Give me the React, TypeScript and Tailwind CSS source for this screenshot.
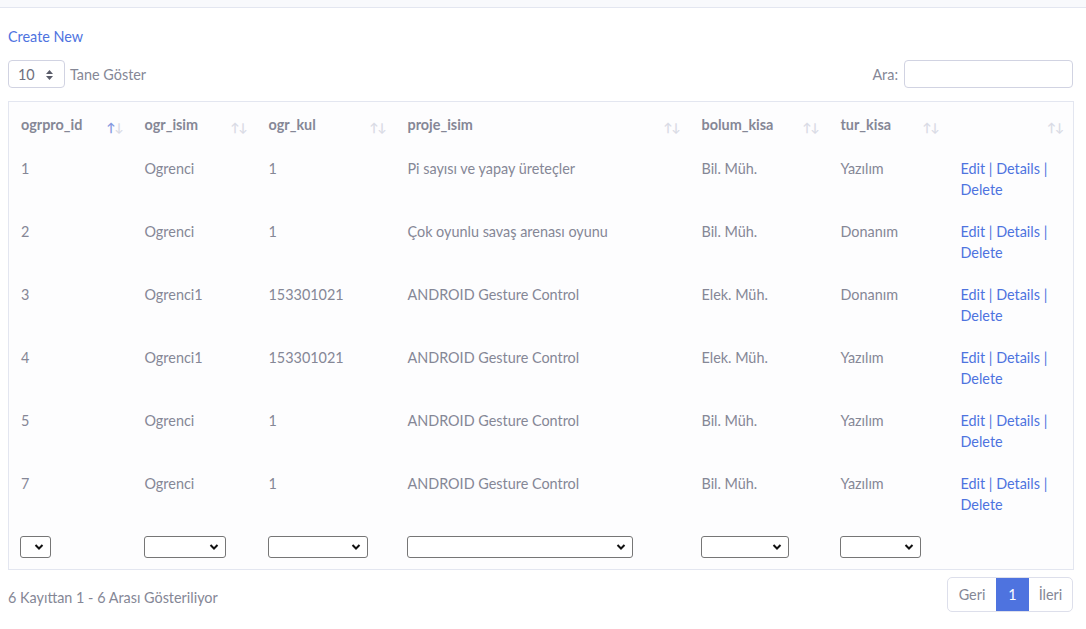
import React from 'react';

type Row = {
  id: string;
  isim: string;
  kul: string;
  proje: string;
  bolum: string;
  tur: string;
};

const rows: Row[] = [
  { id: '1', isim: 'Ogrenci', kul: '1', proje: 'Pi sayısı ve yapay üreteçler', bolum: 'Bil. Müh.', tur: 'Yazılım' },
  { id: '2', isim: 'Ogrenci', kul: '1', proje: 'Çok oyunlu savaş arenası oyunu', bolum: 'Bil. Müh.', tur: 'Donanım' },
  { id: '3', isim: 'Ogrenci1', kul: '153301021', proje: 'ANDROID Gesture Control', bolum: 'Elek. Müh.', tur: 'Donanım' },
  { id: '4', isim: 'Ogrenci1', kul: '153301021', proje: 'ANDROID Gesture Control', bolum: 'Elek. Müh.', tur: 'Yazılım' },
  { id: '5', isim: 'Ogrenci', kul: '1', proje: 'ANDROID Gesture Control', bolum: 'Bil. Müh.', tur: 'Yazılım' },
  { id: '7', isim: 'Ogrenci', kul: '1', proje: 'ANDROID Gesture Control', bolum: 'Bil. Müh.', tur: 'Yazılım' },
];

const columns = [
  { label: 'ogrpro_id', width: 124, active: true, filter: 31 },
  { label: 'ogr_isim', width: 124, filter: 82 },
  { label: 'ogr_kul', width: 139, filter: 100 },
  { label: 'proje_isim', width: 294, filter: 226 },
  { label: 'bolum_kisa', width: 139, filter: 88 },
  { label: 'tur_kisa', width: 120, filter: 81 },
  { label: '', width: 125, filter: 0 },
];

function SortIcon({ active }: { active?: boolean }) {
  return (
    <span className="absolute right-[10px] top-[15px] text-[12px] leading-[21px] tracking-[-1px] select-none">
      <span className={active ? 'text-[#8598e0]' : 'text-[#d9dbe5]'}>↑</span>
      <span className="text-[#d9dbe5]">↓</span>
    </span>
  );
}

function FilterSelect({ width }: { width: number }) {
  return (
    <div
      className="relative h-[22px] rounded-[3px] border border-[#767676] bg-white"
      style={{ width }}
    >
      <svg
        className="absolute right-[6px] top-[6px]"
        width="10"
        height="8"
        viewBox="0 0 10 8"
        fill="none"
      >
        <path d="M1.5 2 L5 5.5 L8.5 2" stroke="#111" strokeWidth="2" />
      </svg>
    </div>
  );
}

export default function App() {
  return (
    <div className="min-h-[629px] bg-white font-['Lato','Noto_Sans',sans-serif] text-[14.4px] leading-[21px] text-[#858796]">
      <div className="h-[8px] border-b border-[#e3e6f0] bg-[#f8f9fc]" />

      <div className="pl-[8px] pr-[13px] pt-[18px]">
        <a href="#" className="text-[#4e73df]">
          Create New
        </a>

        <div className="mt-[13px] flex items-center justify-between">
          <div className="flex items-center gap-[5px]">
            <div className="relative flex h-[28px] w-[57px] items-center rounded-[4px] border border-[#d1d3e2] bg-white pl-[9px] text-[#6e707e]">
              10
              <svg
                className="absolute right-[11px] top-[9px]"
                width="7"
                height="10"
                viewBox="0 0 7 10"
              >
                <path d="M3.5 0 L7 4 H0 Z M3.5 10 L0 6 H7 Z" fill="#5a5c69" />
              </svg>
            </div>
            <span>Tane Göster</span>
          </div>
          <div className="flex items-center gap-[6px]">
            <span>Ara:</span>
            <div className="h-[28px] w-[169px] rounded-[4px] border border-[#d1d3e2] bg-white" />
          </div>
        </div>

        <table className="mt-[13px] w-full table-fixed border-collapse border border-[#e3e6f0] bg-[#fdfdfe]">
          <colgroup>
            {columns.map((c, i) => (
              <col key={i} style={{ width: c.width }} />
            ))}
          </colgroup>
          <thead>
            <tr>
              {columns.map((c, i) => (
                <th
                  key={i}
                  className="relative px-[12px] pb-[13px] pt-[12px] text-left font-bold text-[#858796]"
                >
                  {c.label}
                  <SortIcon active={c.active} />
                </th>
              ))}
            </tr>
          </thead>
          <tbody>
            {rows.map((r, i) => (
              <tr key={i}>
                <td className="px-[12px] pb-[32px] pt-[10px] align-top">{r.id}</td>
                <td className="px-[12px] pb-[32px] pt-[10px] align-top">{r.isim}</td>
                <td className="px-[12px] pb-[32px] pt-[10px] align-top">{r.kul}</td>
                <td className="px-[12px] pb-[32px] pt-[10px] align-top">{r.proje}</td>
                <td className="px-[12px] pb-[32px] pt-[10px] align-top">{r.bolum}</td>
                <td className="px-[12px] pb-[32px] pt-[10px] align-top">{r.tur}</td>
                <td className="h-[63px] px-[12px] pb-[11px] pt-[10px] align-top text-[#4e73df]">
                  <a href="#">Edit</a> | <a href="#">Details</a> |{' '}
                  <a href="#">Delete</a>
                </td>
              </tr>
            ))}
            <tr>
              {columns.map((c, i) => (
                <td key={i} className="h-[43px] pl-[11px] pr-[12px] pb-[11px] pt-[10px] align-top">
                  {c.filter > 0 && <FilterSelect width={c.filter} />}
                </td>
              ))}
            </tr>
          </tbody>
        </table>

        <div className="mt-[7px] flex items-center justify-between">
          <span className="pt-[5px]">6 Kayıttan 1 - 6 Arası Gösteriliyor</span>
          <div className="flex h-[35px] overflow-hidden rounded-[5px] border border-[#dddfeb]">
            <span className="flex w-[48px] items-center justify-center">Geri</span>
            <span className="flex w-[33px] items-center justify-center bg-[#4e73df] text-white">
              1
            </span>
            <span className="flex w-[43px] items-center justify-center">İleri</span>
          </div>
        </div>
      </div>
    </div>
  );
}
